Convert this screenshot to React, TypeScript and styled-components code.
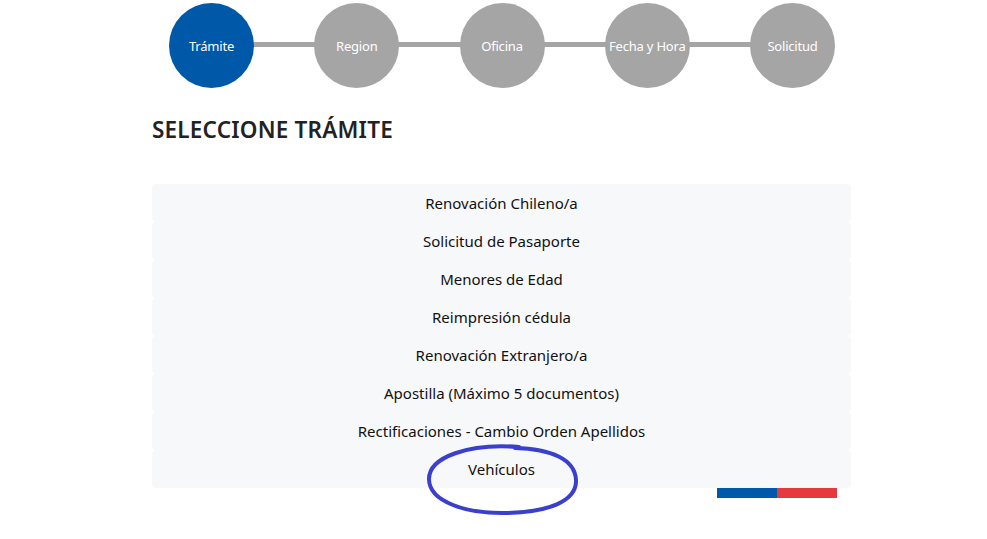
import styled, { createGlobalStyle } from 'styled-components';

const GlobalStyle = createGlobalStyle`
  html, body {
    margin: 0;
    height: 100%;
    background: #ffffff;
  }
  body {
    font-family: "Noto Sans", "Open Sans", sans-serif;
    color: #111;
  }
`;

const Page = styled.div`
  position: relative;
  width: 700px;
  min-height: 536px;
  margin-left: 152px;
  padding-top: 3px;
`;

const Stepper = styled.div`
  position: relative;
  display: flex;
  justify-content: space-between;
  width: 666px;
  margin-left: 17px;
`;

const Track = styled.div`
  position: absolute;
  left: 40px;
  right: 40px;
  top: 39px;
  height: 5px;
  background: #a5a5a5;
`;

const Step = styled.div<{ $active?: boolean }>`
  position: relative;
  z-index: 1;
  width: 85px;
  height: 85px;
  border-radius: 50%;
  background: ${(p) => (p.$active ? '#0059a8' : '#a5a5a5')};
  color: #fff;
  font-size: 13px;
  display: flex;
  align-items: center;
  justify-content: center;
  white-space: nowrap;
  letter-spacing: -0.2px;
`;

const Title = styled.h2`
  margin: 27px 0 0;
  font-size: 22.5px;
  font-weight: 600;
  color: #222;
  line-height: 30px;
  letter-spacing: 0.2px;
`;

const List = styled.div`
  position: relative;
  margin-top: 39px;
  width: 699px;
`;

const Item = styled.div`
  height: 38px;
  display: flex;
  align-items: center;
  justify-content: center;
  background: #f7f8fa;
  border-radius: 4px;
  font-size: 15px;
  color: #111;
`;

const Flag = styled.div`
  display: flex;
  margin-left: 565px;
`;

const FlagPart = styled.div<{ $color: string }>`
  width: 60px;
  height: 10px;
  background: ${(p) => p.$color};
`;

const Mark = styled.svg`
  position: absolute;
  z-index: 5;
  left: 275px;
  top: 258px;
  overflow: visible;
`;

const steps = ['Trámite', 'Region', 'Oficina', 'Fecha y Hora', 'Solicitud'];
const tramites = [
  'Renovación Chileno/a',
  'Solicitud de Pasaporte',
  'Menores de Edad',
  'Reimpresión cédula',
  'Renovación Extranjero/a',
  'Apostilla (Máximo 5 documentos)',
  'Rectificaciones - Cambio Orden Apellidos',
  'Vehículos',
];

function App(): any {
  return (
    <Page>
      <GlobalStyle />
      <Stepper>
        <Track />
        {steps.map((s, i) => (
          <Step key={s} $active={i === 0}>
            {s}
          </Step>
        ))}
      </Stepper>
      <Title>SELECCIONE TRÁMITE</Title>
      <List>
        {tramites.map((t) => (
          <Item key={t}>{t}</Item>
        ))}
        <Mark width="152" height="74" viewBox="0 0 152 74">
          <path
            d="M92 5 C 42 1, 2 15, 2 37 C 2 60, 40 72, 80 71 C 120 70, 150 60, 149 38 C 148 17, 124 7, 88 6"
            fill="none"
            stroke="#3b3fce"
            strokeWidth="4"
            strokeLinecap="round"
          />
        </Mark>
      </List>
      <Flag>
        <FlagPart $color="#0059a8" />
        <FlagPart $color="#e3393f" />
      </Flag>
    </Page>
  );
}

export default App;
